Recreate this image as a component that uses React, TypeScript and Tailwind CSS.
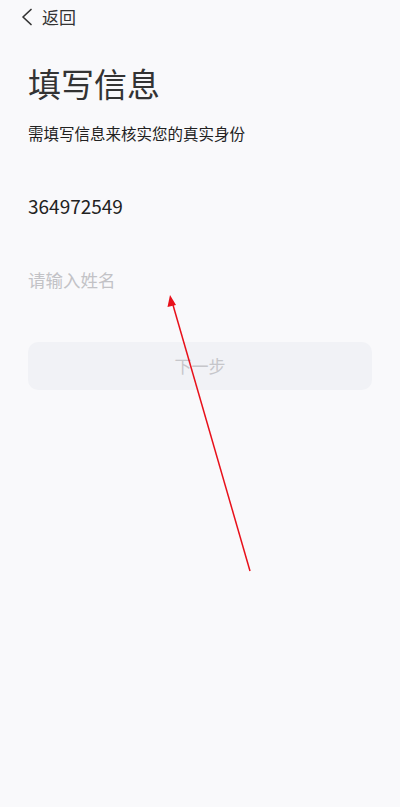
const font = { fontFamily: '"Noto Sans CJK SC", "Noto Sans", sans-serif' };

const Arrow = () => (
  <svg className="absolute left-0 top-0 pointer-events-none" width="400" height="807" viewBox="0 0 400 807">
    <line x1="250" y1="571" x2="173" y2="305" stroke="#e8101a" strokeWidth="1.5" />
    <polygon points="170,295 167.5,307 176,305" fill="#e8101a" />
  </svg>
);

export default function App() {
  return (
    <div className="relative w-[400px] h-[807px] bg-[#f9f9fb] text-[#222]" style={font}>
      <div className="flex items-center h-[33px] pl-[21px]">
        <svg width="12" height="18" viewBox="0 0 12 18" className="text-[#333]">
          <polyline points="10,1.5 2,9 10,16.5" fill="none" stroke="currentColor" strokeWidth="1.7" strokeLinecap="round" strokeLinejoin="round" />
        </svg>
        <span className="ml-[9px] text-[17px] text-[#333]">返回</span>
      </div>
      <div className="px-[28px]">
        <h1 className="mt-[30px] text-[33px] leading-[40px] text-[#333]">填写信息</h1>
        <p className="mt-[19px] text-[15.5px] leading-[22px] text-[#222]">需填写信息来核实您的真实身份</p>
        <div className="mt-[50px] text-[19px] leading-[24px] text-[#222]">364972549</div>
        <input
          placeholder="请输入姓名"
          className="mt-[50px] w-full h-[24px] bg-transparent text-[17.5px] leading-[24px] outline-none placeholder:text-[#c2c2c6]"
        />
        <button className="mt-[50px] w-full h-[48px] rounded-[10px] bg-[#f1f2f6] text-[17px] text-[#c6c6ca]">
          下一步
        </button>
      </div>
      <Arrow />
    </div>
  );
}
